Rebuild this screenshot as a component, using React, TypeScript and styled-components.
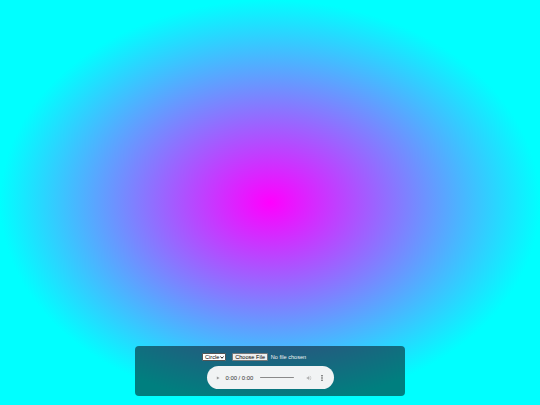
import React from "react"
import styled, { createGlobalStyle } from "styled-components"

const GlobalStyle = createGlobalStyle`
  html, body {
    margin: 0;
    padding: 0;
    height: 100%;
  }
  body {
    font-family: "Liberation Sans", Arial, sans-serif;
    overflow: hidden;
  }
`

const Stage = styled.div`
  position: relative;
  width: 100vw;
  height: 100vh;
  background: radial-gradient(closest-side, #ff00ff 0%, #00ffff 100%);
`

const Controls = styled.div`
  position: absolute;
  left: 50%;
  bottom: 9px;
  transform: translateX(-50%);
  width: 270px;
  height: 50px;
  box-sizing: border-box;
  padding-top: 7px;
  background: rgba(0, 0, 0, 0.5);
  border-radius: 4px;
  display: flex;
  flex-direction: column;
  align-items: center;
  gap: 5px;
  color: #fff;
`

const TopRow = styled.div`
  display: flex;
  align-items: center;
  gap: 6px;
  height: 8px;
`

const SelectBox = styled.div`
  width: 24px;
  height: 8px;
  box-sizing: border-box;
  background: #fff;
  border: 0.5px solid #555;
  border-radius: 1px;
  display: flex;
  align-items: center;
  justify-content: space-between;
  padding: 0 1.5px 0 2px;
  font-size: 5.6px;
  color: #000;
`

const FileInput = styled.div`
  width: 106px;
  display: flex;
  align-items: center;
  gap: 2.5px;
  font-size: 5.6px;
`

const FileButton = styled.div`
  height: 8px;
  box-sizing: border-box;
  padding: 0 2.2px;
  background: #efefef;
  border: 0.5px solid #767676;
  border-radius: 1px;
  color: #000;
  display: flex;
  align-items: center;
  white-space: nowrap;
`

const FileName = styled.span`
  color: #f2f2f2;
  white-space: nowrap;
`

const Player = styled.div`
  width: 127px;
  height: 23px;
  box-sizing: border-box;
  background: #f1f3f4;
  border-radius: 12px;
  display: flex;
  align-items: center;
  padding-left: 9px;
  color: #303030;
  font-size: 5.9px;
`

const Time = styled.span`
  margin-left: 6px;
  white-space: nowrap;
`

const Track = styled.div`
  margin-left: 7px;
  width: 34px;
  height: 1.5px;
  border-radius: 1px;
  background: #8a8a8a;
`

const VolumeIcon = styled.svg`
  margin-left: 12px;
  width: 6px;
  height: 6px;
`

const MoreIcon = styled.svg`
  margin-left: 9px;
  width: 2px;
  height: 6px;
`

export default function App() {
  return (
    <>
      <GlobalStyle />
      <Stage>
        <Controls>
          <TopRow>
            <SelectBox>
              <span>Circle</span>
              <svg width="4" height="3" viewBox="0 0 8 6">
                <path d="M1 1 L4 4.5 L7 1" fill="none" stroke="#000" strokeWidth="1.8" />
              </svg>
            </SelectBox>
            <FileInput>
              <FileButton>Choose File</FileButton>
              <FileName>No file chosen</FileName>
            </FileInput>
          </TopRow>
          <Player>
            <svg width="4" height="4" viewBox="0 0 10 10">
              <path d="M2 1 L9 5 L2 9 Z" fill="#9a9a9a" />
            </svg>
            <Time>0:00 / 0:00</Time>
            <Track />
            <VolumeIcon viewBox="0 0 24 24">
              <path d="M3 9v6h4l5 5V4L7 9H3z" fill="#b0b0b0" />
              <path d="M16.5 12c0-1.8-1-3.3-2.5-4v8c1.5-.7 2.5-2.2 2.5-4z" fill="#b0b0b0" />
              <path d="M14 3.2v2.1c2.9.9 5 3.5 5 6.7s-2.1 5.8-5 6.7v2.1c4-.9 7-4.5 7-8.8s-3-7.9-7-8.8z" fill="#b0b0b0" />
            </VolumeIcon>
            <MoreIcon viewBox="0 0 4 12">
              <circle cx="2" cy="1.5" r="1.3" fill="#222" />
              <circle cx="2" cy="6" r="1.3" fill="#222" />
              <circle cx="2" cy="10.5" r="1.3" fill="#222" />
            </MoreIcon>
          </Player>
        </Controls>
      </Stage>
    </>
  )
}
